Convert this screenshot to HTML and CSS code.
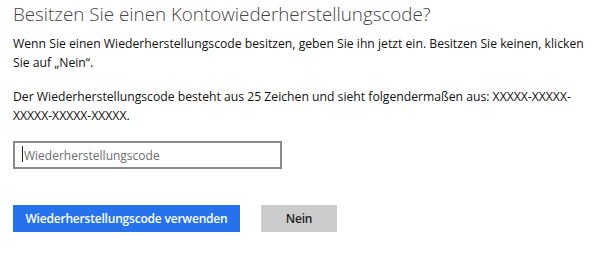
FILE: index.html
```html
<!DOCTYPE html>
<html lang="de">
<head>
  <meta charset="UTF-8">
  <title>Kontowiederherstellungscode</title>
  <link rel="stylesheet" href="styles.css">
</head>
<body>

  <div class="page">
    <h1>Besitzen Sie einen Kontowiederherstellungscode?</h1>

    <p class="text">Wenn Sie einen Wiederherstellungscode besitzen, geben Sie ihn jetzt ein. Besitzen Sie keinen, klicken Sie auf „Nein“.</p>

    <p class="text second">Der Wiederherstellungscode besteht aus 25 Zeichen und sieht folgendermaßen aus: XXXXX-XXXXX-XXXXX-XXXXX-XXXXX.</p>

    <div class="field">
      <span class="caret"></span>
      <input type="text" id="code" placeholder="Wiederherstellungscode">
    </div>

    <div class="buttons">
      <button class="primary">Wiederherstellungscode verwenden</button>
      <button class="secondary">Nein</button>
    </div>
  </div>

</body>
</html>
```

FILE: styles.css
```css
body {
  margin: 0;
  padding: 0;
  background: #fff;
  font-family: 'Open Sans', 'Noto Sans', sans-serif;
  color: #000;
}
.page {
  padding: 2px 13px 0 13px;
}
h1 {
  margin: 0;
  font-size: 18.8px;
  font-weight: 300;
  color: #444;
  line-height: 24px;
}
.text {
  margin: 8px 0 0 0;
  font-size: 12.2px;
  line-height: 19px;
  width: 574px;
  color: #111;
}
.text.second {
  margin-top: 15px;
}
.field {
  position: relative;
  margin-top: 16px;
  width: 269px;
}
.field input {
  box-sizing: border-box;
  display: block;
  width: 269px;
  height: 28px;
  margin: 0;
  padding: 0 0 0 9px;
  border: 2px solid #8a8a8a;
  font-family: inherit;
  font-size: 12px;
  color: #000;
}
.field input::placeholder {
  color: #6d6d6d;
}
.caret {
  position: absolute;
  left: 9px;
  top: 5px;
  width: 1px;
  height: 16px;
  background: #222;
}
.buttons {
  display: flex;
  gap: 21px;
  margin-top: 36px;
}
button {
  height: 27px;
  border: none;
  margin: 0;
  padding: 0;
  font-family: inherit;
  font-size: 12px;
  font-weight: 600;
  letter-spacing: -0.2px;
  cursor: pointer;
}
.primary {
  width: 227px;
  background: #2672ec;
  color: #fff;
}
.secondary {
  width: 76px;
  background: #cccccc;
  color: #222;
}
```
